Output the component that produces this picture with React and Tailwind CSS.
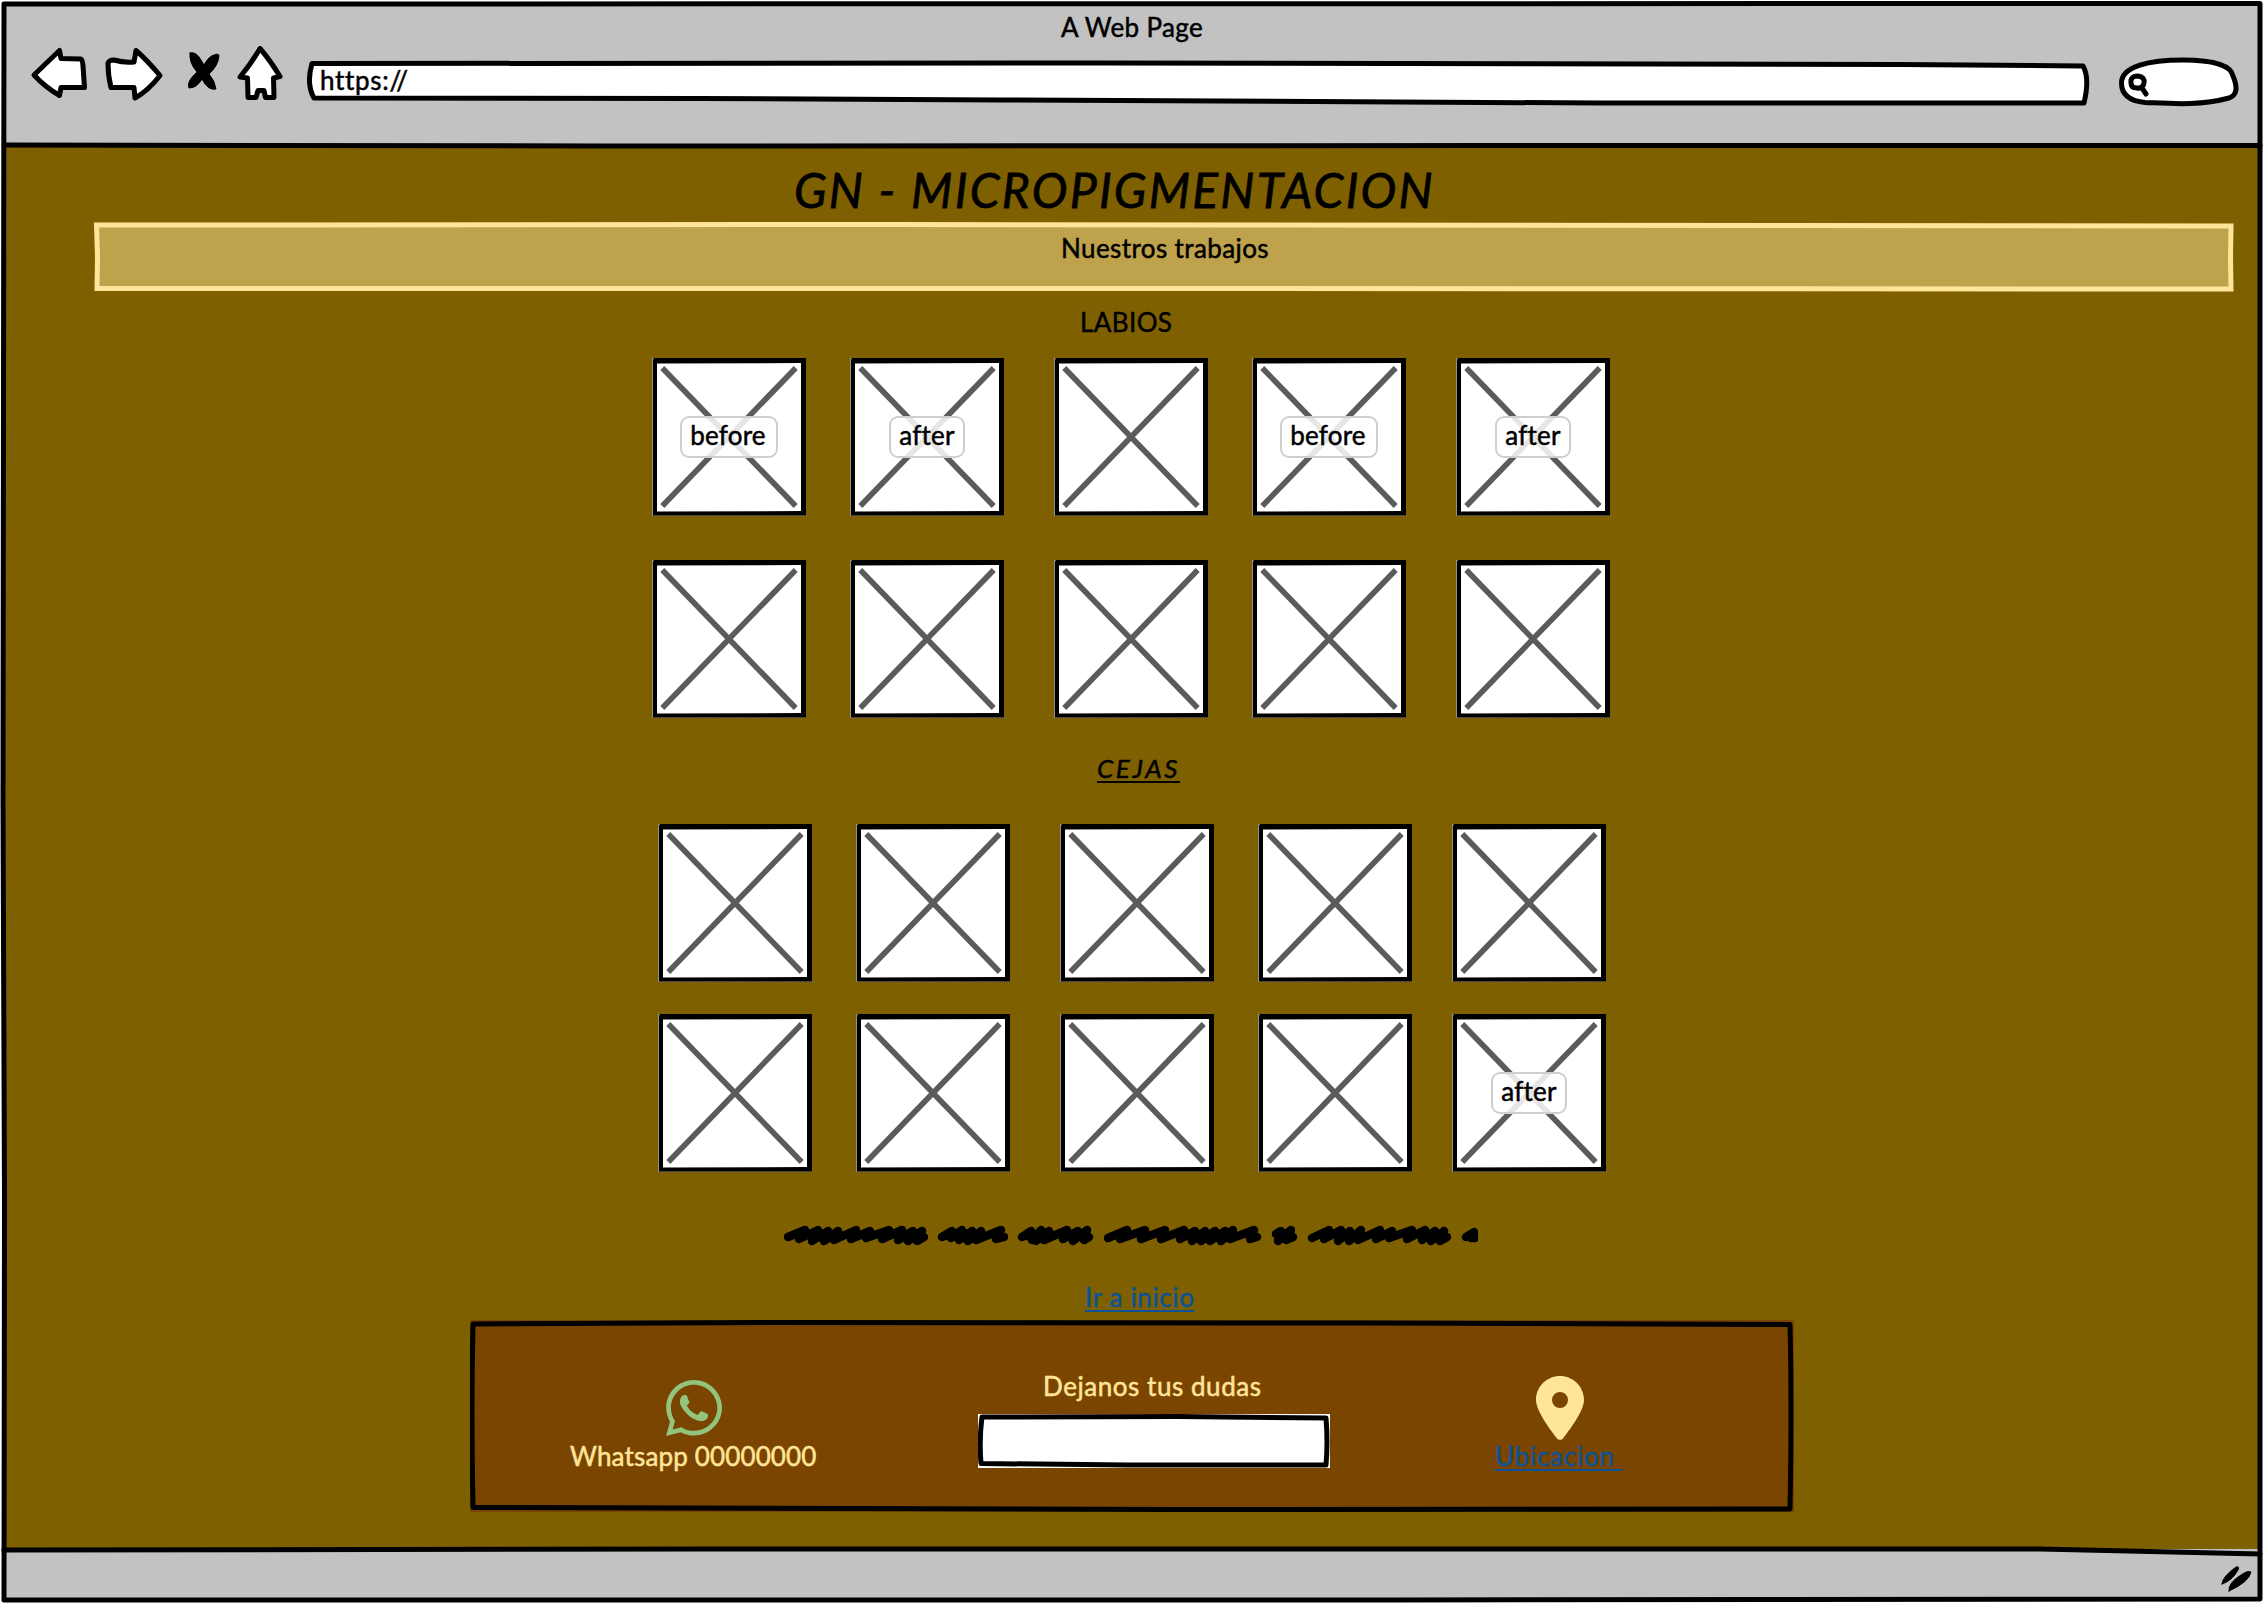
import React from 'react';

const T = 'whitespace-pre text-[26px] leading-[34px] h-8 [-webkit-text-stroke:0.5px]';

function Ink({ viewBox, className, children, width = 5, fill = 'none' }) {
  return (
    <svg viewBox={viewBox} className={className} preserveAspectRatio="none" fill={fill} stroke="#000" strokeWidth={width} strokeLinecap="round" strokeLinejoin="round">
      {children}
    </svg>
  );
}

function Tile({ label, className = '' }) {
  return (
    <div className={`relative flex h-[158px] w-[154px] shrink-0 items-center justify-center ${className}`}>
      <svg viewBox="0 0 154 158" className="absolute inset-0 h-full w-full" fill="none">
        <rect width="154" height="158" fill="#000" />
        <path d="M0 0H2L1 2V157.5H154V158H0Z" fill="#8f8f8f" />
        <path d="M5 5.6L149 5V153L5 153.5Z" fill="#fff" />
        <path d="M10.300 10L143.700 148M143.700 10L10.300 148" stroke="#5b5b5b" strokeWidth="5.6" />
      </svg>
      {label && (
        <div className={`relative flex h-[42px] justify-center rounded-[9px] border-2 border-[#cfcfcf] bg-white/85 ${label === 'before' ? 'w-[98px] pr-0.5' : 'w-[76px]'}`}>
          <span className={`${T} tracking-[0.2px]`}>{label}</span>
        </div>
      )}
    </div>
  );
}

function Row({ last, className, labels = [] }) {
  const gaps = ['', 'ml-[44px]', 'ml-[50px]', 'ml-[44px]', last];
  return (
    <div className={`flex ${className}`}>
      {gaps.map((gap, i) => (
        <Tile key={i} className={gap} label={labels[i]} />
      ))}
    </div>
  );
}

const scribbles = [
  'M788 1237L805 1230L799 1239L818 1230L812 1241L828 1231L824 1241L838 1231L834 1240L856 1230L851 1239L870 1231L866 1238L889 1230L882 1239L902 1230L898 1240L913 1231L908 1241L922 1231L917 1241L924 1237',
  'M942 1237L952 1231L951 1238L962 1230L959 1240L972 1231L968 1241L981 1231L976 1240L1001 1230L996 1239L1004 1237',
  'M1022 1237L1031 1231L1032 1240L1041 1230L1036 1241L1049 1231L1044 1240L1067 1230L1063 1239L1078 1231L1073 1241L1087 1230L1084 1240L1089 1237',
  'M1108 1238L1127 1230L1120 1239L1145 1230L1141 1239L1165 1230L1161 1239L1184 1230L1180 1239L1195 1231L1192 1241L1205 1231L1201 1241L1215 1231L1210 1241L1225 1231L1221 1241L1233 1230L1230 1239L1254 1230L1250 1239L1257 1237',
  'M1276 1234L1281 1231L1278 1241L1291 1230L1286 1240L1293 1237',
  'M1312 1238L1329 1230L1324 1239L1341 1230L1338 1241L1350 1231L1349 1241L1361 1230L1358 1240L1380 1230L1376 1239L1392 1231L1389 1238L1412 1230L1407 1239L1425 1230L1422 1240L1435 1231L1431 1241L1444 1231L1440 1241L1447 1237',
  'M1466 1237L1474 1232L1471 1238L1475 1238L1475 1233',
  'M813 1236H836M901 1236H922M948 1236H980M1026 1236H1050M1073 1236H1086M1186 1236H1232M1278 1236H1290M1339 1236H1360M1422 1236H1445',
];

export default function App() {
  return (
    <div className="relative flex h-[1604px] w-[2264px] flex-col overflow-hidden bg-white px-1 pt-0.5 font-['Lato',sans-serif] text-black">
      <header className="flex h-[144px] flex-col bg-[#c2c2c2] pt-2">
        <div className={`${T} ml-[1057px] tracking-[0.35px]`}>A Web Page</div>
        <div className="mt-0.5 flex h-16 pl-[26px]">
          <Ink viewBox="30 44 58 64" className="h-16 w-[58px]" fill="#fff">
            <path d="M34 75L59.5 50.500L61 58.500L81 59Q82.500 60 83 66L84.500 87.500L61 87.500L59.500 95.500Q45 87 34 75Z" />
          </Ink>
          <Ink viewBox="104 44 60 64" className="ml-4 h-16 w-[60px]" fill="#fff">
            <path d="M108 63Q109 60 114 60Q124 63 134 62L136 50.500Q146 59 160 75.500Q148 91 135 98L134 87.500L111 87.500Q108 76 108 63Z" />
          </Ink>
          <Ink viewBox="186 44 36 64" className="ml-[22px] h-16 w-9" fill="#000" width={1}>
            <path d="M190 53Q196 51 201 60L204 65Q209 56 214 55Q219 53 219 56Q218 66 209 74Q215 81 216 89Q208 91 202 79Q197 88 189 88Q186 82 197 72Q189 63 190 53Z" />
          </Ink>
          <Ink viewBox="236 44 48 64" className="ml-3.5 h-16 w-12" fill="#fff">
            <path d="M260 48.500Q270 60 280 76.500L273.500 78L274 97.500L265.500 97.500L264 90.500L258 90.500L256 97.500L248 97.500L247.500 78L240 77Q251 64 260 48.500Z" />
          </Ink>
          <div className="relative ml-5 h-16 w-[1788px]">
            <Ink viewBox="304 44 1788 64" className="absolute inset-0 h-full w-full" fill="#fff">
              <path d="M312 63.500L1100 63L1900 64.500L2083 66Q2090 78 2084 103L1600 103L1000 100L700 98.500L314 98Q306 84 312 63.500Z" />
            </Ink>
            <div className={`${T} relative ml-4 mt-[19px] tracking-[0.7px]`}>https://</div>
          </div>
          <Ink viewBox="2116 44 126 64" className="ml-6 h-16 w-[126px]" fill="#fff">
            <path d="M2121.500 83C2121.500 66 2150 60 2183 60C2212 60 2231 65 2233 76C2238 88 2237 95 2229 98C2200 106 2170 103.500 2145 102.500C2130 101 2121.500 95 2121.500 83Z" />
            <path d="M2131 83Q2130 76 2138 76Q2145 77 2144 83Q2143 89 2137 88Q2131 88 2131 83ZM2142 88L2146 94" />
          </Ink>
        </div>
      </header>

      <main className="flex h-[1403px] flex-col bg-[#7f6000] pt-[13px]">
        <h1 className="ml-[790px] h-[60px] whitespace-pre text-[48px] italic leading-[62px] tracking-[2.2px] [-webkit-text-stroke:0.8px]">GN - MICROPIGMENTACION</h1>
        <div className="relative ml-[90px] mt-[3px] h-[70px] w-[2140px] pt-[9px]">
          <svg viewBox="0 0 2140 70" className="absolute inset-0 h-full w-full">
            <path d="M2.500 3L800 2.500L2137 4L2136.500 35L2137 67L900 66.500L3 66.500L3.500 35Z" fill="#bfa24c" stroke="#ffe599" strokeWidth="5" />
          </svg>
          <div className={`${T} relative ml-[967px] tracking-[0.4px]`}>Nuestros trabajos</div>
        </div>
        <h2 className={`${T} ml-[1076px] mt-[13px] tracking-[0.4px]`}>LABIOS</h2>
        <Row last="ml-[50px]" className="ml-[648px] mt-[21px]" labels={['before', 'after', null, 'before', 'after']} />
        <Row last="ml-[50px]" className="ml-[648px] mt-[44px]" />
        <h2 className={`${T} ml-[1093px] mt-[33px] w-fit italic tracking-[2.6px] underline decoration-2 underline-offset-[3px] [text-decoration-skip-ink:none]`}>CEJAS</h2>
        <Row last="ml-[40px]" className="ml-[654px] mt-[41px]" />
        <Row last="ml-[40px]" className="ml-[654px] mt-[32px]" labels={[null, null, null, null, 'after']} />
        <Ink viewBox="780 1222 698 28" className="ml-[776px] mt-[50px] h-7 w-[698px]" width={8.5}>
          {scribbles.map((d) => <path key={d} d={d} />)}
        </Ink>
        <a className={`${T} ml-[1081px] mt-[30px] w-fit tracking-[0.63px] text-[#0b5394] underline decoration-2 underline-offset-[3px] [text-decoration-skip-ink:none]`}>Ir a inicio</a>
        <section className="relative ml-[466px] mt-2 h-[192px] w-[1324px]">
          <svg viewBox="0 0 1324 192" className="absolute inset-0 h-full w-full">
            <rect width="1324" height="192" fill="#7a4500" />
            <path d="M3 4L300 2.500L900 3L1320 4.500Q1322 90 1320 189L700 189.500L3 187.500Q1 90 3 4Z" fill="none" stroke="#000" strokeWidth="5" strokeLinejoin="round" />
          </svg>
          <div className="relative flex">
            <div className="ml-[100px] w-[260px] pt-[60px]">
              <svg viewBox="0 32 448 448" className="ml-24 h-14 w-14" fill="#93c47d">
                <path d="M380.900 97.100C339 55.100 283.200 32 223.900 32c-122.400 0-222 99.600-222 222 0 39.100 10.200 77.300 29.600 111L0 480l117.700-30.900c32.400 17.700 68.900 27 106.100 27h.1c122.300 0 224.100-99.600 224.100-222 0-59.300-25.200-115-67.100-157zm-157 341.600c-33.200 0-65.700-8.900-94-25.700l-6.700-4-69.800 18.300L72 359.200l-4.400-7c-18.500-29.400-28.200-63.300-28.200-98.200 0-101.700 82.800-184.500 184.600-184.500 49.300 0 95.600 19.200 130.400 54.100 34.800 34.900 56.200 81.200 56.100 130.500 0 101.800-84.900 184.600-186.600 184.600zm101.200-138.200c-5.500-2.800-32.800-16.200-37.900-18-5.100-1.900-8.800-2.800-12.500 2.800-3.700 5.600-14.300 18-17.600 21.800-3.200 3.700-6.500 4.200-12 1.400-32.600-16.300-54-29.100-75.500-66-5.700-9.800 5.700-9.100 16.300-30.300 1.800-3.700.9-6.900-.5-9.700-1.400-2.800-12.500-30.100-17.100-41.200-4.500-10.800-9.100-9.300-12.500-9.500-3.200-.2-6.900-.2-10.600-.2-3.700 0-9.700 1.400-14.800 6.900-5.100 5.600-19.400 19-19.400 46.300 0 27.300 19.900 53.700 22.600 57.400 2.800 3.700 39.100 59.700 94.800 83.800 35.200 15.200 49 16.500 66.600 13.900 10.700-1.600 32.800-13.400 37.400-26.400 4.600-13 4.600-24.100 3.200-26.400-1.300-2.500-5-3.900-10.500-6.600z" />
              </svg>
              <div className={`${T} mt-[3px] tracking-[0.15px] text-[#ffe599]`}>Whatsapp 00000000</div>
            </div>
            <div className="ml-[148px] w-[352px] pt-[49px]">
              <div className={`${T} ml-[65px] tracking-[0.55px] text-[#ffe599]`}>Dejanos tus dudas</div>
              <Ink viewBox="0 0 352 54" className="mt-[13px] h-[54px] w-[352px]">
                <rect width="352" height="54" fill="#fff" stroke="none" />
                <path d="M4 3L200 2.500L348 4Q350 28 348 51L150 51L3 49.500Q1 26 4 3Z" />
              </Ink>
            </div>
            <div className="ml-[165px] w-[130px] pt-14">
              <svg viewBox="0 0 384 512" className="ml-[41px] h-16 w-12" fill="#ffe599">
                <path d="M215.700 499.200C267 435 384 279.400 384 192C384 86 298 0 192 0S0 86 0 192c0 87.400 117 243 168.300 307.200c12.300 15.300 35.100 15.300 47.400 0zM192 128a64 64 0 1 1 0 128a64 64 0 1 1 0-128z" />
              </svg>
              <a className={`${T} -mt-px block w-fit tracking-[0.75px] text-[#0b5394] underline decoration-2 underline-offset-[3px] [text-decoration-skip-ink:none]`}>{'Ubicacion '}</a>
            </div>
          </div>
        </section>
      </main>

      <footer className="flex h-[52px] justify-end bg-[#c2c2c2] pr-1.5 pt-3.5">
        <Ink viewBox="2218 1563 36 30" className="h-[30px] w-9" width={1} fill="#000">
          <path d="M2222 1584Q2222 1577 2236 1567Q2240 1566 2238 1570Q2232 1581 2222 1584ZM2229 1591Q2228 1583 2241 1575Q2248 1570 2251 1572Q2249 1582 2229 1591Z" />
        </Ink>
      </footer>

      <Ink viewBox="0 0 2264 1604" className="pointer-events-none absolute inset-0 h-full w-full" width={5}>
        <path d="M4 4L2260 3.500L2260 800L2260 1599L1400 1600L4 1600L4.500 1200L3 800L4 4Z" />
        <path d="M4 145L600 146L1500 145.500L2260 145.500M4 1550L700 1549L2040 1549L2260 1554" />
      </Ink>
    </div>
  );
}
